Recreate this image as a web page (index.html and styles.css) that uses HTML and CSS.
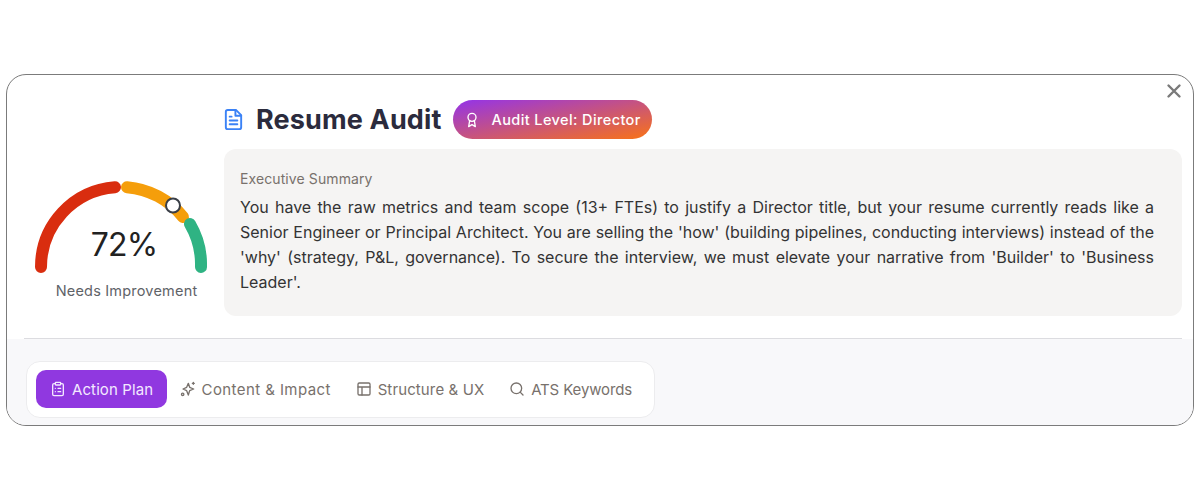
FILE: index.html
```html
<!DOCTYPE html>
<html lang="en">
<head>
<meta charset="utf-8">
<title>Resume Audit</title>
<link rel="stylesheet" href="styles.css">
</head>
<body>
<main class="card">
  <button class="close" aria-label="Close">
    <svg width="16" height="16" viewBox="0 0 16 16" fill="none" stroke="#7a7a7a" stroke-width="2.4" stroke-linecap="round"><path d="M2.5 2.5l11 11M13.500 2.500l-11 11"/></svg>
  </button>
  <section class="top">
    <div class="score">
      <div class="gauge">
        <svg class="gauge-svg" width="184" height="110" viewBox="0 0 184 110" fill="none" stroke-width="12" stroke-linecap="round">
          <path stroke="#d92d0f" d="M12 93A80 80 0 0 1 86 13.200"/>
          <path stroke="#f59e0b" d="M98 13.200A80 80 0 0 1 154 43"/>
          <path stroke="#2fb383" d="M161 50A80 80 0 0 1 172 93"/>
          <circle cx="144" cy="31.500" r="7" fill="#fff" stroke="#3a3f47" stroke-width="2"/>
        </svg>
        <div class="pct">72%</div>
      </div>
      <div class="verdict">Needs Improvement</div>
    </div>
    <div class="main">
      <div class="head">
        <svg class="doc" width="23" height="23" viewBox="0 0 24 24" fill="none" stroke="#3b82f6" stroke-width="2" stroke-linecap="round" stroke-linejoin="round"><path d="M14.500 2H6a2 2 0 0 0-2 2v16a2 2 0 0 0 2 2h12a2 2 0 0 0 2-2V7.500z"/><path d="M14 2v6h6M16 13H8M16 17H8M10 9H8"/></svg>
        <h1>Resume Audit</h1>
        <div class="badge">
          <svg width="16" height="16" viewBox="0 0 24 24" fill="none" stroke="#fff" stroke-width="2" stroke-linecap="round" stroke-linejoin="round"><circle cx="12" cy="8" r="6"/><path d="M15.500 12.900L17 22l-5-3-5 3 1.500-9.100"/></svg>
          <span>Audit Level: Director</span>
        </div>
      </div>
      <div class="summary">
        <h2>Executive Summary</h2>
        <p>You have the raw metrics and team scope (13+ FTEs) to justify a Director title, but your resume currently reads like a Senior Engineer or Principal Architect. You are selling the 'how' (building pipelines, conducting interviews) instead of the 'why' (strategy, P&amp;L, governance). To secure the interview, we must elevate your narrative from 'Builder' to 'Business Leader'.</p>
      </div>
    </div>
  </section>
  <div class="rule"></div>
  <section class="bottom">
    <nav class="tabs">
      <a class="tab active">
        <svg width="16" height="16" viewBox="0 0 24 24" fill="none" stroke="currentColor" stroke-width="2" stroke-linecap="round" stroke-linejoin="round"><rect x="8" y="2" width="8" height="4" rx="1"/><path d="M16 4h2a2 2 0 0 1 2 2v14a2 2 0 0 1-2 2H6a2 2 0 0 1-2-2V6a2 2 0 0 1 2-2h2"/><path d="M12 11h4M12 16h4M8 11h.01M8 16h.01"/></svg>
        Action Plan
      </a>
      <a class="tab wide">
        <svg width="16" height="16" viewBox="0 0 24 24" fill="none" stroke="currentColor" stroke-width="2" stroke-linecap="round" stroke-linejoin="round"><path d="M12.500 3.500l2 6 6 2.500-6 2.500-2 6.500-2.500-6.500-5.500-2.500 5.500-2.500z"/><path d="M20 2v3M21.500 3.500h-3"/><circle cx="4" cy="20" r="1.800"/></svg>
        Content &amp; Impact
      </a>
      <a class="tab">
        <svg width="16" height="16" viewBox="0 0 24 24" fill="none" stroke="currentColor" stroke-width="2" stroke-linecap="round" stroke-linejoin="round"><rect x="3" y="3" width="18" height="18" rx="2"/><path d="M3 9h18M9 21V9"/></svg>
        Structure &amp; UX
      </a>
      <a class="tab narrow">
        <svg width="16" height="16" viewBox="0 0 24 24" fill="none" stroke="currentColor" stroke-width="2" stroke-linecap="round" stroke-linejoin="round"><circle cx="11" cy="11" r="8"/><path d="M21 21l-4.300-4.300"/></svg>
        ATS Keywords
      </a>
    </nav>
  </section>
</main>
</body>
</html>
```
FILE: styles.css
```css
* { box-sizing: border-box; }
html, body { margin: 0; background: #fff; }
body { padding: 74px 6px; font-family: "Inter", "Liberation Sans", sans-serif; }
.card {
  position: relative;
  height: 352px;
  border: 1px solid #7b7b7b;
  border-radius: 20px;
  overflow: hidden;
  background: #fff;
  display: flex;
  flex-direction: column;
}
.close {
  position: absolute;
  top: 8px;
  right: 11px;
  padding: 0;
  border: 0;
  background: none;
  line-height: 0;
}
.top { display: flex; flex: none; height: 263px; padding: 25px 11px 0 0; }
.score { width: 217px; padding: 74px 0 0 22px; flex: none; }
.gauge { position: relative; width: 190px; height: 110px; }
.gauge-svg { display: block; }
.pct {
  position: absolute;
  left: 0;
  right: 0;
  top: 51px;
  text-align: center;
  font-size: 32px;
  line-height: 40px;
  color: #222;
  letter-spacing: -0.8px;
}
.verdict {
  margin-top: -3px;
  text-align: center;
  font-size: 14.5px;
  line-height: 20px;
  letter-spacing: 0.2px;
  color: #5f6368;
}
.main { flex: 1; min-width: 0; }
.head { display: flex; align-items: center; height: 39px; }
.doc { flex: none; margin-left: -2px; }
h1 {
  margin: 0 11px 0 11px;
  font-size: 27px;
  line-height: 39px;
  font-weight: 700;
  letter-spacing: 0.15px;
  color: #2b2b3d;
  white-space: nowrap;
}
.badge {
  display: flex;
  align-items: center;
  gap: 12px;
  height: 39px;
  width: 199px;
  padding-left: 11px;
  border-radius: 20px;
  background: linear-gradient(to bottom right, #9333ea 0%, #f97316 100%);
  color: #fff;
  font-size: 14.5px;
  font-weight: 500;
  letter-spacing: 0.4px;
  white-space: nowrap;
}
.summary {
  margin-top: 10px;
  height: 167px;
  padding: 20px 28px 0 16px;
  border-radius: 12px;
  background: #f5f4f3;
}
h2 {
  margin: 0 0 6px;
  font-size: 14px;
  line-height: 20px;
  font-weight: 400;
  letter-spacing: 0.1px;
  color: #78716c;
}
p {
  margin: 0;
  font-size: 16px;
  line-height: 25px;
  color: #333;
  text-align: justify;
}
.rule { height: 1px; margin: 0 11px 0 17px; background: #dcdce0; flex: none; }
.bottom { flex: 1; min-height: 0; padding: 22px 0 0 19px; background: #f8f8fa; }
.tabs {
  display: inline-flex;
  align-items: flex-start;
  height: 57px;
  padding: 8px 10px 0 9px;
  border: 1px solid #ececee;
  border-radius: 14px;
  background: #fff;
}
.tab {
  display: flex;
  align-items: center;
  gap: 6px;
  height: 38px;
  padding: 0 12.4px;
  border-radius: 10px;
  font-size: 15px;
  letter-spacing: 0.12px;
  color: #78716c;
  white-space: nowrap;
}
.tab.wide { letter-spacing: 0.42px; }
.tab.narrow { letter-spacing: -0.13px; }
.tab.active { padding: 0 14px; letter-spacing: 0.1px; background: #9038e0; color: #f3e8ff; }
```
